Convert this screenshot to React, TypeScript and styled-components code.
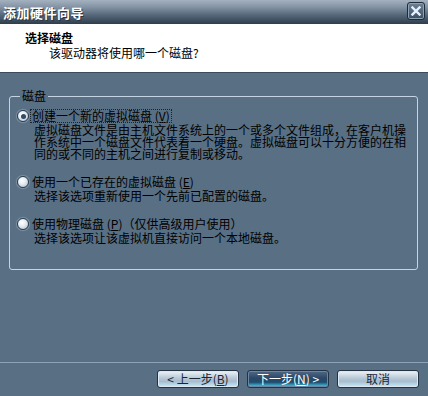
import React from "react";
import styled, { createGlobalStyle } from "styled-components";

const GlobalStyle = createGlobalStyle`
  html, body {
    margin: 0;
    padding: 0;
    background: #586f84;
  }
  body {
    font-family: "Noto Sans CJK SC", "Liberation Sans", sans-serif;
    font-size: 12px;
    color: #000;
  }
`;

const options = [
  {
    label: "创建一个新的虚拟磁盘",
    key: "V",
    extra: "",
    checked: true,
    lines: [
      "虚拟磁盘文件是由主机文件系统上的一个或多个文件组成，在客户机操",
      "作系统中一个磁盘文件代表着一个硬盘。虚拟磁盘可以十分方便的在相",
      "同的或不同的主机之间进行复制或移动。",
    ],
  },
  {
    label: "使用一个已存在的虚拟磁盘",
    key: "E",
    extra: "",
    checked: false,
    lines: ["选择该选项重新使用一个先前已配置的磁盘。"],
  },
  {
    label: "使用物理磁盘",
    key: "P",
    extra: "（仅供高级用户使用）",
    checked: false,
    lines: ["选择该选项让该虚拟机直接访问一个本地磁盘。"],
  },
];

export default function App() {
  return (
    <>
      <GlobalStyle />
      <Window>
        <TitleBar>
          <Title>添加硬件向导</Title>
          <CloseButton>
            <svg width="10" height="10" viewBox="0 0 10 10">
              <path
                d="M1.5 1.5 L8.5 8.5 M8.5 1.5 L1.5 8.5"
                stroke="#e6f2ff"
                strokeWidth="2.4"
                strokeLinecap="square"
              />
            </svg>
          </CloseButton>
        </TitleBar>

        <Header>
          <HeaderTitle>选择磁盘</HeaderTitle>
          <HeaderSub>该驱动器将使用哪一个磁盘?</HeaderSub>
        </Header>

        <Body>
          <Group>
            <Legend>磁盘</Legend>
            {options.map((o) => (
              <Option key={o.key}>
                <OptionLabel>
                  <Radio $checked={o.checked} />
                  <LabelText $focused={o.checked}>
                    {o.label} (<u>{o.key}</u>){o.extra}
                  </LabelText>
                </OptionLabel>
                <Description>
                  {o.lines.map((l) => (
                    <div key={l}>{l}</div>
                  ))}
                </Description>
              </Option>
            ))}
          </Group>
        </Body>

        <Footer>
          <Button>
            &lt; 上一步(<u>B</u>)
          </Button>
          <Button $primary>
            下一步(<u>N</u>) &gt;
          </Button>
          <Button>取消</Button>
        </Footer>
      </Window>
    </>
  );
}

const Window = styled.div`
  width: 428px;
  height: 396px;
  display: flex;
  flex-direction: column;
  background: #586f84;
  overflow: hidden;
`;

const TitleBar = styled.div`
  height: 24px;
  display: flex;
  align-items: center;
  justify-content: space-between;
  padding: 0 3px 0 3px;
  box-sizing: border-box;
  background: linear-gradient(
    to bottom,
    #a4b1bf 0%,
    #8393a4 30%,
    #56687a 62%,
    #2e3d4c 100%
  );
`;

const Title = styled.span`
  color: #fff;
  font-size: 13px;
  font-weight: bold;
  letter-spacing: 0.5px;
  text-shadow: 1px 1px 0 #2a3644;
`;

const CloseButton = styled.div`
  width: 18px;
  height: 18px;
  margin-top: -2px;
  display: flex;
  align-items: center;
  justify-content: center;
  box-sizing: border-box;
  border: 1px solid #1e2a36;
  border-radius: 3px;
  background: linear-gradient(to bottom, #6e8196, #3c4e62);
  box-shadow: inset 0 0 0 1px #8ea2b6;
`;

const Header = styled.div`
  height: 49px;
  background: #fff;
  border-bottom: 1px solid #3b4b5b;
  padding: 7px 0 0 25px;
  box-sizing: border-box;
  display: flex;
  flex-direction: column;
`;

const HeaderTitle = styled.div`
  font-weight: bold;
  line-height: 14px;
`;

const HeaderSub = styled.div`
  line-height: 14px;
  margin-top: 1px;
  padding-left: 24px;
`;

const Body = styled.div`
  flex: 1;
  padding: 17px 0 0 9px;
`;

const Group = styled.fieldset`
  width: 409px;
  height: 180px;
  margin: 0;
  padding: 6px 7px 0 7px;
  box-sizing: border-box;
  border: 1px solid #c4d4e4;
  border-radius: 3px;
  display: flex;
  flex-direction: column;
  gap: 14px;
`;

const Legend = styled.legend`
  padding: 0 2px;
  margin-left: 3px;
  line-height: 12px;
`;

const Option = styled.div`
  display: flex;
  flex-direction: column;
`;

const OptionLabel = styled.div`
  display: flex;
  align-items: center;
  height: 16px;
  gap: 2px;
`;

const Radio = styled.span<{ $checked: boolean }>`
  width: 12px;
  height: 12px;
  box-sizing: border-box;
  border-radius: 50%;
  border: 1px solid #2e3f50;
  background: radial-gradient(circle at 40% 35%, #ffffff 0%, #e6edf3 40%, #a9b8c6 100%);
  box-shadow: 0 0 1px 1px rgba(200, 215, 230, 0.35);
  display: flex;
  align-items: center;
  justify-content: center;

  &::after {
    content: "";
    width: 5px;
    height: 5px;
    border-radius: 50%;
    background: #2f4b66;
    display: ${(p) => (p.$checked ? "block" : "none")};
  }
`;

const LabelText = styled.span<{ $focused: boolean }>`
  line-height: 12px;
  padding: 0 1px;
  outline: ${(p) => (p.$focused ? "1px dotted #1a2430" : "none")};
  outline-offset: 0;

  & u {
    text-underline-offset: 1px;
  }
`;

const Description = styled.div`
  padding-left: 17px;
  line-height: 12px;
  white-space: nowrap;
`;

const Footer = styled.div`
  height: 34px;
  border-top: 1px solid #8fa3b6;
  display: flex;
  justify-content: flex-end;
  align-items: flex-start;
  gap: 8px;
  padding: 7px 9px 0 0;
  box-sizing: border-box;
`;

const Button = styled.div<{ $primary?: boolean }>`
  width: 82px;
  height: 18px;
  box-sizing: border-box;
  border: 1px solid #243343;
  border-radius: 3px;
  display: flex;
  align-items: center;
  justify-content: center;
  line-height: 14px;
  color: ${(p) => (p.$primary ? "#ffffff" : "#1a2634")};
  background: ${(p) =>
    p.$primary
      ? "linear-gradient(to bottom, #4e6a88 0%, #2c4866 45%, #1f4c6e 70%, #3fd8f6 100%)"
      : "linear-gradient(to bottom, #eef4f8 0%, #b8c8d6 45%, #a6bccf 65%, #c6ecfa 100%)"};
  box-shadow: inset 0 0 0 1px
    ${(p) => (p.$primary ? "#6a86a2" : "#dce8f2")};

  & u {
    text-underline-offset: 1px;
  }
`;
